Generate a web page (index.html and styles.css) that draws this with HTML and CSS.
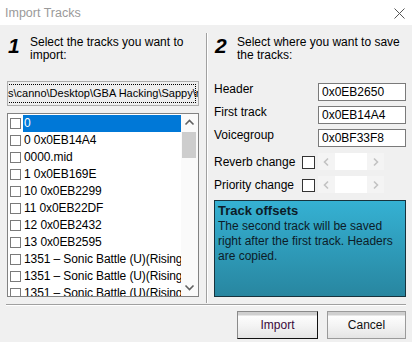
FILE: index.html
```html
<!DOCTYPE html>
<html lang="en">
<head>
  <meta charset="UTF-8" />
  <title>Import Tracks</title>
  <link rel="stylesheet" href="styles.css">
</head>
<body>

  <div class="titlebar">
    <span class="title">Import Tracks</span>
    <svg class="close" width="11" height="11" viewBox="0 0 11 11">
      <path d="M0.5 0.5 L10.5 10.5 M10.5 0.5 L0.5 10.5" stroke="#555" stroke-width="1" fill="none" />
    </svg>
  </div>

  <div class="main">
    <!-- Paso 1: pistas -->
    <div class="panel">
      <div class="step">
        <span class="step-num">1</span>
        <span class="step-text">Select the tracks you want to import:</span>
      </div>

      <div class="path-box">
        <span class="path-text">s\canno\Desktop\GBA Hacking\Sappy\midi</span>
      </div>

      <div class="track-list">
        <ul class="tracks">
          <li class="track selected"><span class="cb"></span><span class="name">0</span></li>
          <li class="track"><span class="cb"></span><span class="name">0 0x0EB14A4</span></li>
          <li class="track"><span class="cb"></span><span class="name">0000.mid</span></li>
          <li class="track"><span class="cb"></span><span class="name">1 0x0EB169E</span></li>
          <li class="track"><span class="cb"></span><span class="name">10 0x0EB2299</span></li>
          <li class="track"><span class="cb"></span><span class="name">11 0x0EB22DF</span></li>
          <li class="track"><span class="cb"></span><span class="name">12 0x0EB2432</span></li>
          <li class="track"><span class="cb"></span><span class="name">13 0x0EB2595</span></li>
          <li class="track"><span class="cb"></span><span class="name">1351 – Sonic Battle (U)(Rising Sun)</span></li>
          <li class="track"><span class="cb"></span><span class="name">1351 – Sonic Battle (U)(Rising Sun)</span></li>
          <li class="track"><span class="cb"></span><span class="name">1351 – Sonic Battle (U)(Rising Sun)</span></li>
        </ul>
        <div class="scrollbar">
          <svg class="arrow" width="17" height="17" viewBox="0 0 17 17">
            <path d="M4.5 10.5 L8.5 6.5 L12.5 10.5" stroke="#606060" stroke-width="1.6" fill="none" />
          </svg>
          <div class="thumb"></div>
          <div class="track-space"></div>
          <svg class="arrow" width="17" height="17" viewBox="0 0 17 17">
            <path d="M4.5 6.5 L8.5 10.5 L12.5 6.5" stroke="#606060" stroke-width="1.6" fill="none" />
          </svg>
        </div>
      </div>
    </div>

    <div class="vsep"></div>

    <!-- Paso 2: destino -->
    <div class="panel">
      <div class="step">
        <span class="step-num">2</span>
        <span class="step-text">Select where you want to save the tracks:</span>
      </div>

      <div class="fields">
        <div class="row">
          <label class="lbl">Header</label>
          <input class="hex" type="text" value="0x0EB2650" />
        </div>
        <div class="row">
          <label class="lbl">First track</label>
          <input class="hex" type="text" value="0x0EB14A4" />
        </div>
        <div class="row">
          <label class="lbl">Voicegroup</label>
          <input class="hex" type="text" value="0x0BF33F8" />
        </div>
        <div class="row row-check">
          <label class="lbl">Reverb change</label>
          <span class="box"></span>
          <div class="spin">
            <svg width="9" height="10" viewBox="0 0 9 10"><path d="M6 1.5 L2.5 5 L6 8.5" stroke="#c2c2c2" stroke-width="1.6" fill="none" /></svg>
            <span class="spin-field"></span>
            <svg width="9" height="10" viewBox="0 0 9 10"><path d="M3 1.5 L6.5 5 L3 8.5" stroke="#c2c2c2" stroke-width="1.6" fill="none" /></svg>
          </div>
        </div>
        <div class="row row-check">
          <label class="lbl">Priority change</label>
          <span class="box"></span>
          <div class="spin">
            <svg width="9" height="10" viewBox="0 0 9 10"><path d="M6 1.5 L2.5 5 L6 8.5" stroke="#c2c2c2" stroke-width="1.6" fill="none" /></svg>
            <span class="spin-field"></span>
            <svg width="9" height="10" viewBox="0 0 9 10"><path d="M3 1.5 L6.5 5 L3 8.5" stroke="#c2c2c2" stroke-width="1.6" fill="none" /></svg>
          </div>
        </div>
      </div>

      <div class="info">
        <div class="info-title">Track offsets</div>
        <p class="info-text">The second track will be saved right after the first track. Headers are copied.</p>
      </div>
    </div>
  </div>

  <div class="hsep"></div>

  <div class="buttons">
    <button class="btn btn-default">Import</button>
    <button class="btn">Cancel</button>
  </div>

</body>
</html>
```

FILE: styles.css
```css
* {
  box-sizing: border-box;
}
body {
  margin: 0;
  width: 412px;
  height: 342px;
  overflow: hidden;
  background: #f0f0f0;
  font-family: "Liberation Sans", Arial, sans-serif;
  font-size: 12px;
  color: #000;
}
.titlebar {
  height: 25px;
  background: #fff;
  display: flex;
  align-items: center;
  justify-content: space-between;
  padding: 0 7px 0 5px;
}
.title {
  color: #9a9a9a;
  font-size: 12.5px;
}
.close {
  margin-top: 1px;
}
.main {
  display: flex;
  padding-top: 8px;
}
.panel {
  width: 192px;
  margin-left: 7px;
}
.vsep {
  width: 2px;
  height: 270px;
  margin-left: 7px;
  border-left: 1px solid #a0a0a0;
  border-right: 1px solid #fff;
}
.vsep + .panel {
  margin-left: 6px;
}
.step {
  display: flex;
  padding-top: 3px;
  height: 29px;
}
.step-num {
  width: 23px;
  font-size: 21px;
  line-height: 20px;
  font-weight: bold;
  font-style: italic;
  padding-left: 1px;
}
.step-text {
  flex: 1;
  line-height: 13px;
}

/* ruta */
.path-box {
  margin-top: 19px;
  height: 25px;
  border: 1px solid #adadad;
  background: #eeeeee;
  padding: 2px;
  overflow: hidden;
}
.path-text {
  display: block;
  height: 19px;
  line-height: 19px;
  font-size: 11px;
  white-space: nowrap;
  outline: 1px dotted #000;
  outline-offset: -1px;
  margin-left: -3px;
  padding-left: 1px;
}

/* lista de pistas */
.track-list {
  margin-top: 7px;
  height: 184px;
  border: 1px solid #828282;
  background: #fff;
  display: flex;
  overflow: hidden;
}
.tracks {
  list-style: none;
  margin: 0;
  padding: 1px 0 0 0;
  flex: 1;
  overflow: hidden;
}
.track {
  display: flex;
  align-items: center;
  height: 17px;
  white-space: nowrap;
}
.cb {
  width: 11px;
  height: 11px;
  border: 1px solid #7a7a7a;
  background: #fff;
  margin: 0 2px 0 2px;
  flex: none;
}
.name {
  flex: 1;
  height: 17px;
  line-height: 17px;
  padding-left: 1px;
  letter-spacing: -0.1px;
  overflow: hidden;
}
.selected .name {
  background: #0078d7;
  color: #fff;
}
.scrollbar {
  width: 17px;
  background: #fafafa;
  display: flex;
  flex-direction: column;
}
.arrow {
  flex: none;
  display: block;
}
.thumb {
  height: 26px;
  margin: 1px 2px 0 1px;
  background: #cdcdcd;
}
.track-space {
  flex: 1;
}

/* campos */
.fields {
  margin-top: 21px;
}
.row {
  display: flex;
  align-items: flex-start;
  height: 23px;
}
.lbl {
  width: 104px;
  line-height: 14px;
  margin-top: -1px;
}
.row-check .lbl {
  width: 88px;
  margin-top: 3px;
}
.hex {
  width: 88px;
  height: 18px;
  margin: 0;
  border: 1px solid #7a7a7a;
  background: #fff;
  font-family: inherit;
  font-size: 12px;
  padding: 0 0 0 3px;
  color: #000;
}
.box {
  width: 13px;
  height: 13px;
  border: 1px solid #333;
  background: #fff;
  margin-top: 4px;
  flex: none;
}
.spin {
  display: flex;
  align-items: center;
  margin-left: 3px;
  margin-top: 1px;
  width: 66px;
  height: 17px;
  background: #f4f4f4;
  padding: 0 4px;
  justify-content: space-between;
}
.spin-field {
  width: 32px;
  height: 17px;
  background: #fff;
}

/* caja de info */
.info {
  margin-top: 2px;
  height: 97px;
  border: 1px solid #17333d;
  background: linear-gradient(#35b1d3, #2886a0);
  padding: 2px 3px 0 3px;
  color: #0c1c28;
}
.info-title {
  font-weight: bold;
  font-size: 13px;
  line-height: 16px;
}
.info-text {
  margin: 0;
  line-height: 15px;
}

.hsep {
  margin: 1px 6px 0 6px;
  height: 2px;
  border-top: 1px solid #a0a0a0;
  border-bottom: 1px solid #fff;
}

/* botones */
.buttons {
  display: flex;
  justify-content: flex-end;
  gap: 9px;
  padding: 5px 6px 0 0;
}
.btn {
  height: 28px;
  width: 79px;
  border: 1px solid #9a9a9a;
  background: linear-gradient(#cfcfcf 0, #cfcfcf 3px, #fdfdfd 4px, #f3f3f3 55%, #e4e4e4 100%);
  font-family: inherit;
  font-size: 12px;
  color: #111;
  padding: 0;
  cursor: pointer;
}
.btn-default {
  width: 81px;
  border-color: #8a8a8a #111 #111 #8a8a8a;
  color: #3a0a3a;
}
```
